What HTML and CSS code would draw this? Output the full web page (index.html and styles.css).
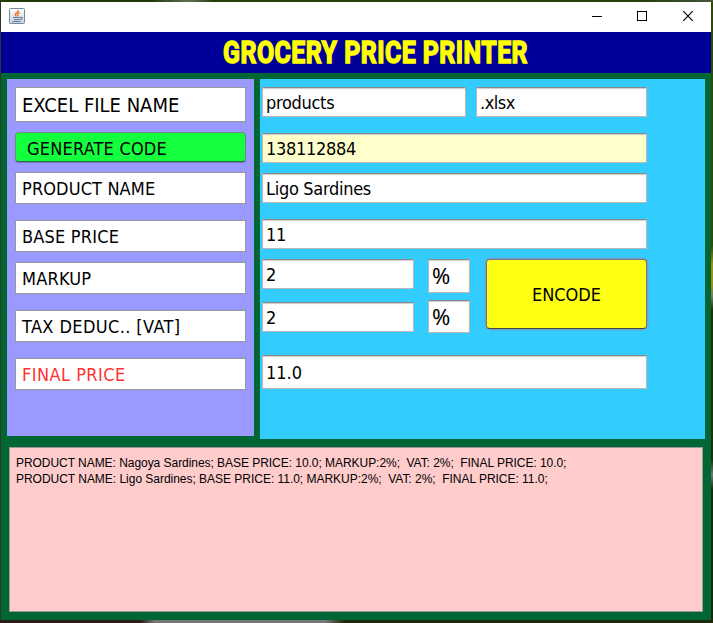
FILE: index.html
```
<!DOCTYPE html>
<html lang="en">
<head>
<meta charset="utf-8">
<title>Grocery Price Printer</title>
<link rel="stylesheet" href="styles.css">
</head>
<body>
<div class="window">
  <header class="titlebar">
    <svg class="app-icon" width="16" height="16" viewBox="0 0 16 16">
      <defs><linearGradient id="tile" x1="0" y1="0" x2="0" y2="1"><stop offset="0" stop-color="#fdfdfd"/><stop offset="1" stop-color="#c9d3dc"/></linearGradient></defs>
      <rect x=".5" y=".5" width="15" height="15" rx="1" fill="url(#tile)" stroke="#6f8ba3"/>
      <path d="M9.500 2.300C9.500 4.500 5.800 4.800 6.300 6.800c.2.800 1 1 1 1.700M10.700 4.800C8.500 5.300 8 6.500 9 8.300" fill="none" stroke="#ee7a28" stroke-width="1.400"/>
      <path d="M4 9.500h7M5 11.500h5.500M3.500 13.500h8M11 9.500c3-1 3 1.500 0 2.300" fill="none" stroke="#5c7d99" stroke-width="1.100"/>
    </svg>
    <svg class="controls" width="104" height="12" viewBox="0 0 104 12" fill="none" stroke="#000">
      <path d="M2 6.500h10M47.500 1.500h9v9h-9z" shape-rendering="crispEdges"/>
      <path d="M93.200 1.200l9.600 9.600M102.800 1.200l-9.600 9.600" stroke-width="1.200"/>
    </svg>
  </header>
  <h1 class="banner"><span>GROCERY PRICE PRINTER</span></h1>
  <main class="body">
    <div class="panels">
      <section class="labels">
        <div class="label tall"><span>EXCEL FILE NAME</span></div>
        <button class="generate"><span class="t-gen">GENERATE CODE</span></button>
        <div class="label"><span class="t-product">PRODUCT NAME</span></div>
        <div class="label gap"><span class="t-base">BASE PRICE</span></div>
        <div class="label"><span class="t-markup">MARKUP</span></div>
        <div class="label gap"><span class="t-tax">TAX DEDUC.. [VAT]</span></div>
        <div class="label gap final"><span class="t-final">FINAL PRICE</span></div>
      </section>
      <section class="fields">
        <div class="row file"><div class="field"><span class="t-file">products</span></div><div class="field"><span class="t-ext">.xlsx</span></div></div>
        <div class="field code"><span class="t-code">138112884</span></div>
        <div class="field name"><span class="t-name">Ligo Sardines</span></div>
        <div class="field base"><span class="t-code">11</span></div>
        <div class="rates">
          <div class="amounts"><div class="field"><span>2</span></div><div class="field"><span>2</span></div></div>
          <div class="units"><div class="field"><span>%</span></div><div class="field"><span>%</span></div></div>
          <button class="encode"><span class="t-encode">ENCODE</span></button>
        </div>
        <div class="field total"><span>11.0</span></div>
      </section>
    </div>
    <pre class="log"><span class="line first">PRODUCT NAME: Nagoya Sardines; BASE PRICE: 10.0; MARKUP:2%;  VAT: 2%;  FINAL PRICE: 10.0;</span>
<span class="line">PRODUCT NAME: Ligo Sardines; BASE PRICE: 11.0; MARKUP:2%;  VAT: 2%;  FINAL PRICE: 11.0;</span></pre>
  </main>
</div>
</body>
</html>
```
FILE: styles.css
```
* { box-sizing: border-box; }
body {
  margin: 0;
  width: 713px;
  height: 623px;
  overflow: hidden;
  padding: 2px 2px 3px 1px;
  background:
    linear-gradient(90deg, #2b1c18 0 140px, #777 155px 325px, #1d2a0a 345px) 0 620px / 713px 3px no-repeat,
    linear-gradient(90deg, #213a08 0 150px, #607050 190px, #263c08 215px 640px, #445540 713px) 0 0 / 713px 2px no-repeat,
    linear-gradient(#2f4a08 0 245px, #a09010 265px 285px, #77776c 297px, #202e0a 310px 460px, #777 475px, #1b2808 490px) 711px 0 / 2px 623px no-repeat,
    #2e3822;
  font-family: "DejaVu Sans Condensed", "DejaVu Sans", sans-serif;
  font-stretch: condensed;
  font-size: 18px;
  color: #000;
}
.window { width: 710px; height: 618px; display: flex; flex-direction: column; background: #006633; }
.titlebar { height: 30px; background: #fff; display: flex; align-items: center; justify-content: space-between; padding: 0 17px 2px 8px; }
.banner { height: 41px; margin: 0; background: #000099; color: #ffff00; display: flex; align-items: center; padding-left: 222px; font: bold 31px/41px Roboto, "Liberation Sans", sans-serif; }
.banner span { white-space: nowrap; letter-spacing: 0.6px; -webkit-text-stroke: 1.5px #ffff00; transform: scaleX(0.803); transform-origin: 0 50%; }
.body { flex: 1; padding: 6px 6px 8px; }
.panels { display: flex; gap: 6px; align-items: flex-start; }
.labels { width: 247px; height: 357px; background: #9999ff; padding: 8px; }
.labels > * { width: 231px; }
.label { height: 32px; margin-top: 10px; border: 1px solid #999; background: #fff; padding-left: 6px; line-height: 32px; }
.label.tall { height: 35px; margin: 0; font-size: 20px; line-height: 34px; }
.label.gap { margin-top: 16px; }
.final { color: #ff3333; }
button { display: block; font: inherit; color: inherit; padding: 0; border-radius: 4px; }
.generate { height: 30px; margin-top: 10px; padding: 2px 0 0 11px; text-align: left; background: #14ff3e; border: 1px solid #748c7e; border-bottom-color: #276a48; box-shadow: 0 1px 1px #7777bb; }
.fields { width: 445px; height: 360px; background: #33ccff; padding: 8px 0 0 2px; }
.field { height: 30px; border: 1px solid #b8b8b8; border-top-color: #888; background: #fff; box-shadow: inset 0 1px 1px #ccc; padding-left: 3px; line-height: 29px; width: 385px; }
.file { display: flex; gap: 10px; }
.file .field:first-child { width: 204px; }
.file .field:last-child { width: 171px; }
.code { margin-top: 16px; background: #ffffcc; }
.name { margin-top: 10px; }
.base { margin-top: 16px; }
.rates { display: flex; margin-top: 9px; height: 75px; }
.amounts { margin-top: 1px; width: 152px; }
.amounts .field { width: 152px; }
.amounts .field + .field { margin-top: 13px; }
.units { margin: 1px 16px 0 14px; }
.units .field { width: 42px; height: 34px; font: 22px/31px "Noto Sans", sans-serif; }
.units .field + .field { height: 33px; margin-top: 7px; line-height: 30px; }
.encode { width: 161px; height: 70px; margin-top: 1px; background: #ffff14; border: 1px solid #777; border-bottom-color: #444; box-shadow: 0 0 2px 1px #8494bb; }
.total { height: 34px; margin-top: 22px; line-height: 33px; }
.log { width: 694px; height: 165px; margin: 8px 0 0 2px; border: 1px solid #999; background: #ffcccc; padding: 7px 6px; font: 12px/16px "Liberation Sans", sans-serif; }
.t-gen, .t-base, .t-markup { letter-spacing: 0.2px; }
.t-product { letter-spacing: 0.12px; }
.t-tax { letter-spacing: 0.4px; }
.t-final { letter-spacing: 0.45px; }
.t-file, .t-code, .t-name { letter-spacing: -0.3px; }
.t-ext { letter-spacing: -0.5px; }
.line { letter-spacing: -0.025px; }
.line.first { letter-spacing: -0.045px; }
```
